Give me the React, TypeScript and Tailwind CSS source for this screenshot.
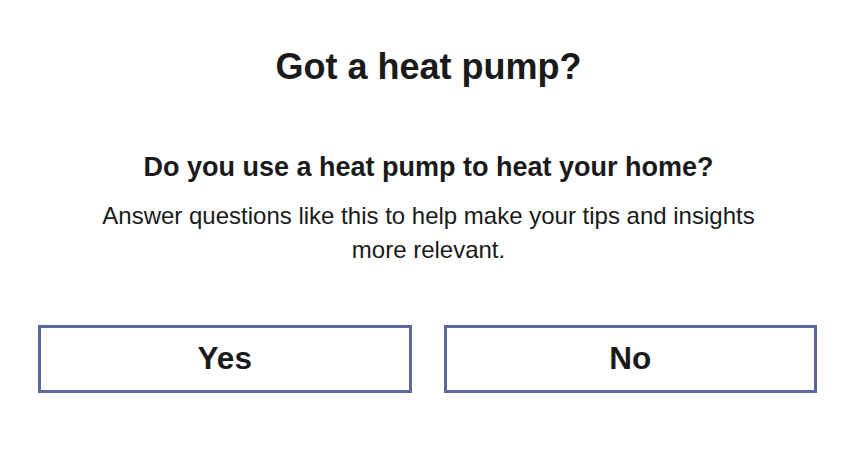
export default function App() {
  return (
    <div className="w-[857px] h-[450px] bg-white text-[#1a1a1a]" style={{ fontFamily: '"Liberation Sans", Arial, sans-serif' }}>
      <div className="flex flex-col items-center pt-[47px]">
        <h1 className="text-[36px] leading-[40px] font-bold">Got a heat pump?</h1>
        <h2 className="mt-[64px] text-[27px] leading-[32px] font-bold">Do you use a heat pump to heat your home?</h2>
        <p className="mt-[16px] w-[700px] text-center text-[24px] leading-[34px]">
          Answer questions like this to help make your tips and insights more relevant.
        </p>
      </div>
      <div className="flex gap-[32px] pl-[38px] pr-[40px] mt-[58px]">
        <button className="flex-1 h-[68px] border-[3px] border-[#5b689e] bg-white text-[31.5px] font-bold">Yes</button>
        <button className="flex-1 h-[68px] border-[3px] border-[#5b689e] bg-white text-[31.5px] font-bold">No</button>
      </div>
    </div>
  );
}
